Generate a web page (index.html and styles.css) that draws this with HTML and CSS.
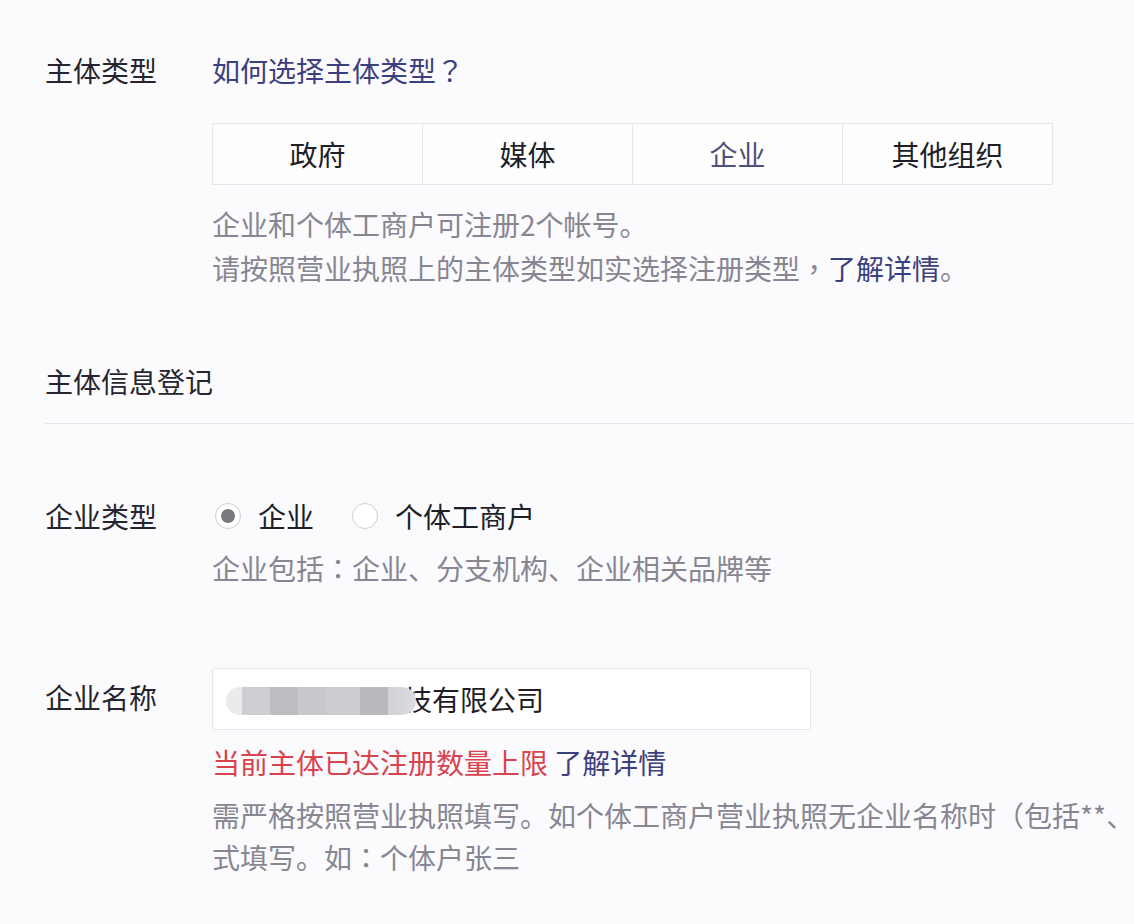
FILE: index.html
```html
<!DOCTYPE html>
<html lang="zh-CN">
<head>
<meta charset="utf-8">
<title>主体信息登记</title>
<link rel="stylesheet" href="styles.css">
</head>
<body>
<div class="page">
  <div class="row row-type">
    <div class="label">主体类型</div>
    <div class="field">
      <a class="link">如何选择主体类型<span class="punct" lang="zh-TW">？</span></a>
      <div class="segments">
        <div class="seg">政府</div>
        <div class="seg">媒体</div>
        <div class="seg seg-active">企业</div>
        <div class="seg">其他组织</div>
      </div>
      <div class="help help-type">
        企业和个体工商户可注册2个帐号。<br>
        请按照营业执照上的主体类型如实选择注册类型<span class="punct" lang="zh-TW">，</span><a class="link">了解详情</a>。
      </div>
    </div>
  </div>

  <div class="section-title">主体信息登记</div>
  <div class="divider"></div>

  <div class="row row-kind">
    <div class="label">企业类型</div>
    <div class="field">
      <div class="radios">
        <label class="radio"><span class="dot dot-on"></span><span>企业</span></label>
        <label class="radio"><span class="dot"></span><span>个体工商户</span></label>
      </div>
      <div class="help">企业包括<span class="punct" lang="zh-TW">：</span>企业、分支机构、企业相关品牌等</div>
    </div>
  </div>

  <div class="row row-name">
    <div class="label label-name">企业名称</div>
    <div class="field">
      <div class="input"><span class="redact"></span><span class="input-text">技有限公司</span></div>
      <div class="error"><span class="err">当前主体已达注册数量上限</span> <a class="link">了解详情</a></div>
      <div class="help help-name">需严格按照营业执照填写。如个体工商户营业执照无企业名称时<span class="punct" lang="zh-TW">（</span>包括**、<br>式填写。如<span class="punct" lang="zh-TW">：</span>个体户张三</div>
    </div>
  </div>
</div>
</body>
</html>
```

FILE: styles.css
```css
html, body {
  margin: 0;
  padding: 0;
  overflow: hidden;
}
body {
  background: #fbfbfd;
  font-family: "Noto Sans CJK SC", "Noto Sans", sans-serif;
  font-size: 28px;
  line-height: 44px;
  color: #26252f;
}
.page {
  padding: 48px 0 0 45px;
  width: 1089px;
}
.row {
  display: flex;
}
.label {
  width: 167px;
  flex: none;
  color: #26252f;
}
.field {
  display: flex;
  flex-direction: column;
  align-items: flex-start;
  white-space: nowrap;
}
.punct {
  font-family: "Noto Sans CJK TC", "Noto Sans CJK SC", sans-serif;
}
.link {
  color: #3d407e;
  text-decoration: none;
}
.segments {
  display: flex;
  margin-top: 31px;
  border: 1px solid #e5e5ea;
  background: #fefeff;
}
.seg {
  width: 209px;
  height: 60px;
  line-height: 60px;
  text-align: center;
  color: #201f27;
}
.seg + .seg {
  border-left: 1px solid #e5e5ea;
}
.seg-active {
  color: #4d5078;
}
.help {
  color: #878692;
}
.help-type {
  margin-top: 17px;
}
.section-title {
  margin-top: 69px;
  color: #26252f;
}
.divider {
  margin-top: 20px;
  height: 1px;
  background: #e6e6eb;
  margin-right: -45px;
}
.row-kind {
  margin-top: 70px;
}
.radios {
  display: flex;
  gap: 35px;
}
.radio {
  display: flex;
  align-items: center;
  gap: 17px;
  color: #201f27;
}
.dot {
  width: 24px;
  height: 24px;
  border: 1px solid #cfcfd6;
  border-radius: 50%;
  background: #fff;
  margin-left: 3px;
  display: flex;
  align-items: center;
  justify-content: center;
  box-sizing: content-box;
}
.dot-on::after {
  content: "";
  width: 14px;
  height: 14px;
  border-radius: 50%;
  background: #78787e;
}
.row-kind .help {
  margin-top: 8px;
}
.row-name {
  margin-top: 78px;
}
.label-name {
  margin-top: 7px;
}
.input {
  width: 584px;
  height: 60px;
  border: 1px solid #e6e6ec;
  border-radius: 3px;
  background: #fff;
  display: flex;
  align-items: center;
  padding-left: 13px;
  color: #1f1e26;
}
.redact {
  width: 190px;
  height: 28px;
  margin-right: -12px;
  margin-top: 4px;
  border-radius: 14px;
  position: relative;
  z-index: 1;
  background: linear-gradient(90deg,
    #ebebee 0, #ebebee 16px,
    #cfcfd3 16px, #cfcfd3 44px,
    #bdbdc2 44px, #bdbdc2 72px,
    #c9c9cd 72px, #c9c9cd 100px,
    #cdcdd1 100px, #cdcdd1 134px,
    #b8babe 134px, #b8babe 162px,
    #d2d2d6 162px, #dcdce0 190px);
}
.error {
  margin-top: 10px;
}
.err {
  color: #d9434d;
}
.help-name {
  margin-top: 10px;
  line-height: 42px;
}
```
